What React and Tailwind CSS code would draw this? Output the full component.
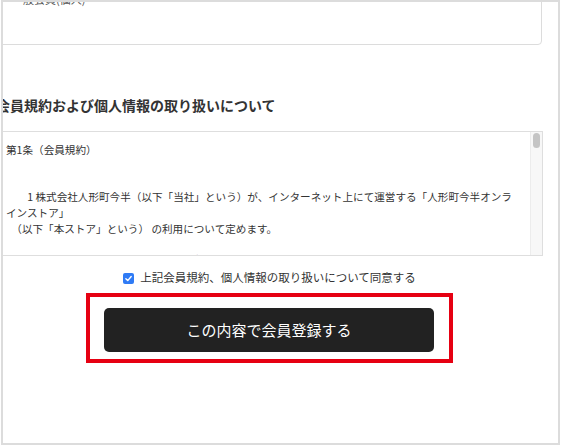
// 会員登録フォーム（規約同意〜登録ボタン）
const FONT = { fontFamily: '"Noto Sans CJK JP", "Noto Sans", sans-serif' }
const IND = '\u3000'

const TermsBox = () => (
  <div className="mt-[16px] flex h-[125px] w-[553px] overflow-hidden border border-[#dedede] bg-white">
    <div className="w-[539px] shrink-0 pl-[15px] pr-[12px] pt-[10px] text-[10.6px] leading-[15.7px] text-[#333]">
      <p>第1条（会員規約）</p>
      <p>&nbsp;</p>
      <p>&nbsp;</p>
      <p>
        {IND + IND}1 株式会社人形町今半（以下「当社」という）が、インターネット上にて運営する「人形町今半オンラインストア」
      </p>
      <p>{IND}（以下「本ストア」という） の利用について定めます。</p>
      <p>&nbsp;</p>
      <p>
        {IND + IND}2 本規約は、本ストアの会員登録を行ったお客様と当社との間に適用されるものとします。
      </p>
    </div>
    {/* スクロールバー */}
    <div className="flex w-[12px] shrink-0 flex-col items-center border-l border-[#ececec] bg-[#f7f7f7] pt-[1px]">
      <div className="h-[15px] w-[7px] rounded-full bg-[#c4c4c4]" />
    </div>
  </div>
)

const AgreeCheck = () => (
  <label className="mt-[14px] flex h-[16px] items-center gap-[6px] text-[11.5px] text-[#333]">
    <span className="flex h-[11px] w-[11px] items-center justify-center rounded-[2px] bg-[#2f7bf5]">
      <svg viewBox="0 0 12 12" className="h-[9px] w-[9px]">
        <path d="M2.5 6.3 L5 8.8 L9.6 3.4" fill="none" stroke="#fff" strokeWidth="1.9" strokeLinecap="round" strokeLinejoin="round" />
      </svg>
    </span>
    <span>上記会員規約、個人情報の取り扱いについて同意する</span>
  </label>
)

export default function App() {
  return (
    <div className="h-[447px] w-[561px] bg-white" style={FONT}>
      <div className="ml-[1px] h-[445px] w-[559px] overflow-hidden border-2 border-[#dcdcdc] bg-white">
        <div className="-ml-[13px] flex flex-col">
          {/* 上の入力欄（見切れ） */}
          <div className="-mt-[37px] h-[80px] w-[552px] rounded-[4px] border border-[#dcdcdc] pl-[21px] pt-[25px] text-[11px] leading-[16px] text-[#555]">
            一般会員(個人)
          </div>

          <h2 className="mt-[50px] pl-[6px] text-[14px] font-bold leading-[20px] text-[#333]">
            会員規約および個人情報の取り扱いについて
          </h2>

          <TermsBox />

          <div className="flex w-[559px] flex-col items-center">
            <AgreeCheck />
            <div className="mt-[7px] border-4 border-[#e60012] pb-[7px] pl-[14px] pr-[15px] pt-[11px]">
              <button className="flex h-[44px] w-[330px] items-center justify-center rounded-[5px] bg-[#222] text-[15px] text-white">
                この内容で会員登録する
              </button>
            </div>
          </div>
        </div>
      </div>
    </div>
  )
}
